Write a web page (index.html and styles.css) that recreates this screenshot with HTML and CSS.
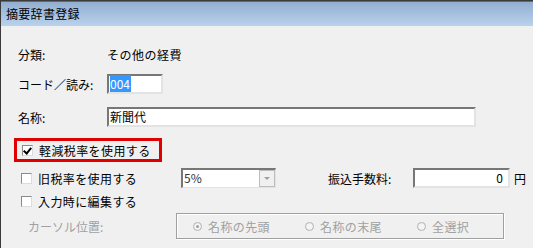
FILE: index.html
```html
<!DOCTYPE html>
<html lang="ja">
<head>
    <meta charset="UTF-8">
    <title>摘要辞書登録</title>
    <link rel="stylesheet" href="styles.css">
</head>
<body>
    <div class="window">
        <div class="titlebar">摘要辞書登録</div>
        <div class="content">
            <div class="row row-class">
                <span class="label">分類:</span>
                <span class="value">その他の経費</span>
            </div>
            <div class="row row-code">
                <span class="label">コード／読み:</span>
                <span class="field code-field"><span class="selected">004</span></span>
            </div>
            <div class="row row-name">
                <span class="label">名称:</span>
                <span class="field name-field">新聞代</span>
            </div>
            <div class="highlight">
                <span class="check checked"></span>
                <span>軽減税率を使用する</span>
            </div>
            <div class="row row-old">
                <span class="check-item">
                    <span class="check"></span>
                    <span>旧税率を使用する</span>
                </span>
                <span class="select">
                    <span class="select-text">5%</span>
                    <span class="select-btn"><span class="arrow"></span></span>
                </span>
                <span class="fee-label">振込手数料:</span>
                <span class="field fee-field">0</span>
                <span class="unit">円</span>
            </div>
            <div class="row row-edit">
                <span class="check-item">
                    <span class="check"></span>
                    <span>入力時に編集する</span>
                </span>
            </div>
            <div class="row row-cursor">
                <span class="cursor-label">カーソル位置:</span>
                <div class="group">
                    <span class="radio-item first"><span class="radio on"></span>名称の先頭</span>
                    <span class="radio-item second"><span class="radio"></span>名称の末尾</span>
                    <span class="radio-item"><span class="radio"></span>全選択</span>
                </div>
            </div>
        </div>
    </div>
</body>
</html>
```
FILE: styles.css
```css
body {
    margin: 0;
    font-family: "Noto Sans CJK JP", sans-serif;
    font-size: 12px;
    color: #000;
    background: #f0f0f0;
}
.window {
    width: 533px;
    height: 248px;
    box-sizing: border-box;
    border-top: 1px solid #3a3a3a;
    border-left: 1px solid #3a3a3a;
    background: #f0f0f0;
    overflow: hidden;
}
.titlebar {
    height: 24px;
    line-height: 24px;
    padding-left: 5px;
    background: linear-gradient(to bottom, #93afd0, #b9d2ed);
    border-top: 1px solid #5a6a80;
    letter-spacing: 0.3px;
}
.content {
    padding-top: 18px;
}
.row {
    display: flex;
    align-items: center;
    height: 20px;
}
.label {
    width: 89px;
    padding-left: 17px;
    flex-shrink: 0;
}
.value {
    letter-spacing: 0.5px;
}
.row-code {
    margin-top: 10px;
}
.row-name {
    margin-top: 13px;
}
.field {
    box-sizing: border-box;
    height: 20px;
    background: #fff;
    border-top: 2px solid #777;
    border-left: 2px solid #777;
    border-right: 2px solid #e3e3e3;
    border-bottom: 2px solid #e3e3e3;
    line-height: 16px;
    padding-left: 1px;
}
.code-field {
    width: 56px;
}
.selected {
    background: #3399ff;
    color: #fff;
    padding-right: 1px;
}
.name-field {
    width: 369px;
}
.highlight {
    display: flex;
    align-items: center;
    margin: 11px 0 0 13px;
    width: 148px;
    height: 24px;
    box-sizing: border-box;
    border: 3px solid #e00000;
    padding-left: 5px;
    letter-spacing: 0.4px;
}
.check {
    width: 11px;
    height: 11px;
    box-sizing: border-box;
    background: #fff;
    border-top: 1px solid #8a8a8a;
    border-left: 1px solid #8a8a8a;
    border-right: 1px solid #dcdcdc;
    border-bottom: 1px solid #dcdcdc;
    margin-right: 6px;
    position: relative;
    flex-shrink: 0;
}
.check.checked::after {
    content: "";
    position: absolute;
    left: 2px;
    top: 0px;
    width: 3px;
    height: 6px;
    border-right: 2px solid #000;
    border-bottom: 2px solid #000;
    transform: rotate(40deg);
}
.check-item {
    display: flex;
    align-items: center;
    padding-left: 20px;
    letter-spacing: 0.4px;
}
.row-old {
    margin-top: 6px;
}
.row-old .check-item {
    width: 160px;
}
.select {
    display: flex;
    box-sizing: border-box;
    width: 95px;
    height: 20px;
    background: #fff;
    border-top: 2px solid #777;
    border-left: 2px solid #777;
    border-right: 1px solid #e3e3e3;
    border-bottom: 1px solid #e3e3e3;
}
.select-text {
    flex: 1;
    line-height: 16px;
    padding-left: 1px;
    color: #333;
}
.select-btn {
    width: 16px;
    background: #f0f0f0;
    border: 1px solid #bdbdbd;
    box-sizing: border-box;
    display: flex;
    align-items: center;
    justify-content: center;
}
.arrow {
    width: 0;
    height: 0;
    border-left: 3px solid transparent;
    border-right: 3px solid transparent;
    border-top: 3px solid #a0a0a0;
}
.fee-label {
    margin-left: 52px;
    width: 85px;
}
.fee-field {
    width: 97px;
    text-align: right;
    padding-right: 5px;
}
.unit {
    margin-left: 4px;
}
.row-edit {
    margin-top: 3px;
}
.row-cursor {
    margin-top: 2px;
    height: 26px;
}
.cursor-label {
    width: 148px;
    padding-left: 27px;
    color: #a0a0a0;
}
.group {
    display: flex;
    align-items: center;
    box-sizing: border-box;
    width: 328px;
    height: 26px;
    border: 1px solid #a0a0a0;
    box-shadow: inset 1px 1px 0 #fff, 1px 1px 0 #fff;
    padding-left: 16px;
    color: #a0a0a0;
    letter-spacing: 0.4px;
}
.radio-item {
    display: flex;
    align-items: center;
}
.radio-item.first,
.radio-item.second {
    width: 112px;
}
.radio {
    width: 9px;
    height: 9px;
    box-sizing: border-box;
    border-radius: 50%;
    border: 1px solid #b0b0b0;
    background: #f4f4f4;
    margin-right: 6px;
    position: relative;
}
.radio.on::after {
    content: "";
    position: absolute;
    left: 2px;
    top: 2px;
    width: 3px;
    height: 3px;
    border-radius: 50%;
    background: #a0a0a0;
}
```
